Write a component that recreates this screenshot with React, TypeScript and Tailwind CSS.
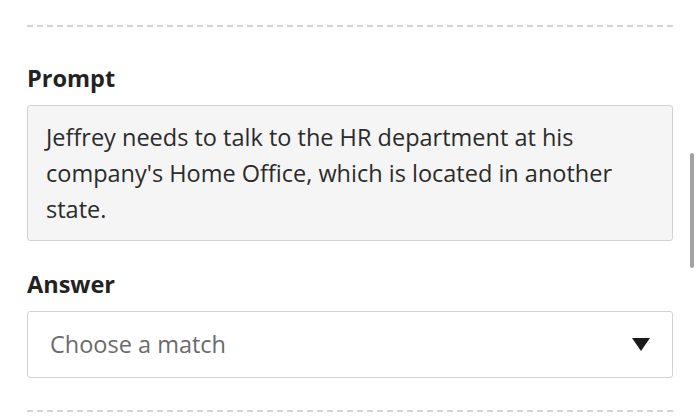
export default function App() {
  return (
    <div className="relative w-[700px] h-[417px] overflow-hidden bg-white text-[#222] font-['Open_Sans',sans-serif]">
      <div className="ml-[27px] w-[646px] pt-[25px]">
        <div className="h-[2px] bg-[linear-gradient(to_right,#d4d4d4_60%,transparent_0)] bg-[length:10px_2px]" />
        <div className="mt-[36px] text-[23.5px] leading-[30px] font-bold text-[#222]">Prompt</div>
        <div className="mt-[12px] h-[136px] rounded-[3px] border border-[#d2d2d2] bg-[#f5f5f5] px-[18px] py-[13px] text-[23.5px] leading-[36px] text-[#2b2b2b]">
          Jeffrey needs to talk to the HR department at his company's Home Office, which is located in another state.
        </div>
        <div className="mt-[28px] text-[23.5px] leading-[30px] font-bold text-[#222]">Answer</div>
        <div className="mt-[12px] h-[67px] rounded-[3px] border border-[#d2d2d2] bg-white flex items-center justify-between pl-[22px] pr-[22px]">
          <span className="text-[23.5px] text-[#6b6b6b]">Choose a match</span>
          <svg width="18" height="13" viewBox="0 0 18 13">
            <polygon points="0,0 18,0 9,13" fill="#1a1a1a" />
          </svg>
        </div>
        <div className="mt-[32px] h-[2px] bg-[linear-gradient(to_right,#d4d4d4_60%,transparent_0)] bg-[length:10px_2px]" />
      </div>
      <div className="absolute left-[690px] top-[153px] w-[4px] h-[115px] rounded-full bg-[#a3a3a3]" />
    </div>
  );
}
